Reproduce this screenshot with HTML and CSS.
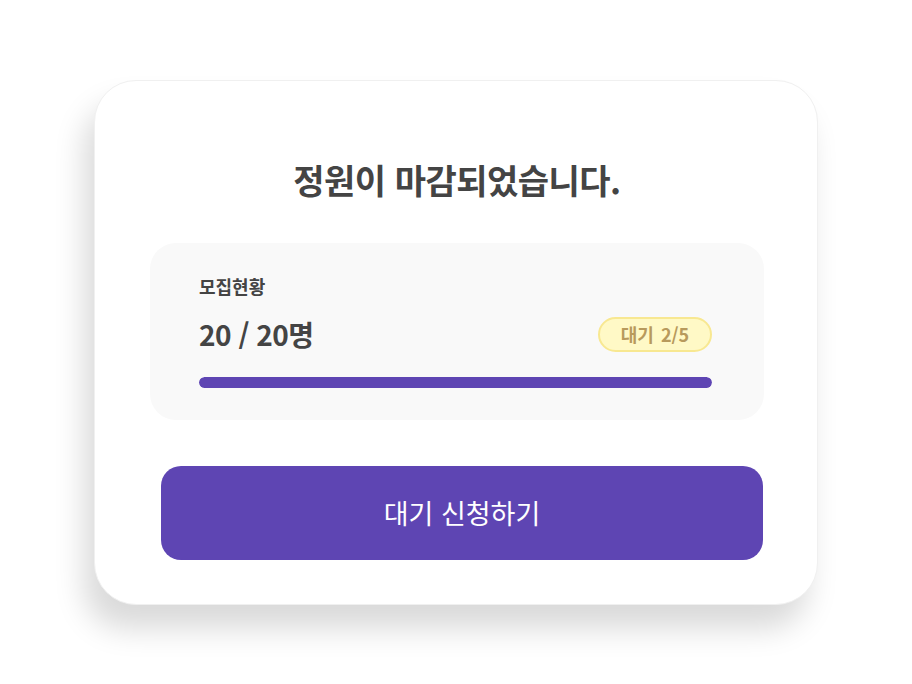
FILE: index.html
```html
<!DOCTYPE html>
<html lang="ko">
<head>
    <meta charset="UTF-8">
    <meta name="viewport" content="width=device-width, initial-scale=1.0">
    <title>모집 마감</title>
    <link rel="stylesheet" href="styles.css">
</head>
<body>
    <div class="closed-card">
        <h1 class="closed-title">정원이 마감되었습니다.</h1>

        <div class="status-box">
            <div class="status-label">모집현황</div>
            <div class="status-row">
                <span class="status-count">20 / 20명</span>
                <span class="wait-badge">대기 2/5</span>
            </div>
            <div class="progress-track">
                <div class="progress-fill" style="width: 100%"></div>
            </div>
        </div>

        <button class="wait-button">대기 신청하기</button>
    </div>
</body>
</html>
```

FILE: styles.css
```css
* {
    margin: 0;
    padding: 0;
    box-sizing: border-box;
    font-family: 'Noto Sans CJK KR', 'Noto Sans', sans-serif;
}

body {
    display: flex;
    justify-content: center;
    align-items: center;
    min-height: 100vh;
    background-color: #ffffff;
}

.closed-card {
    width: 724px;
    height: 525px;
    background-color: white;
    border-radius: 42px;
    border: 1px solid #f0f0f0;
    box-shadow: -10px 24px 30px rgba(0, 0, 0, 0.15);
    padding: 79px 53px 0 55px;
    display: flex;
    flex-direction: column;
}

.closed-title {
    font-size: 34px;
    line-height: 40px;
    font-weight: 700;
    color: #444;
    text-align: center;
    letter-spacing: -0.5px;
    margin-bottom: 43px;
}

.status-box {
    background-color: #f9f9f9;
    border-radius: 26px;
    padding: 32px 52px 32px 49px;
}

.status-label {
    font-size: 18px;
    line-height: 22px;
    font-weight: 700;
    color: #444;
    margin-bottom: 20px;
}

.status-row {
    display: flex;
    justify-content: space-between;
    align-items: center;
    height: 35px;
    margin-bottom: 25px;
}

.status-count {
    font-size: 28px;
    font-weight: 700;
    color: #444;
    letter-spacing: -0.5px;
}

.wait-badge {
    display: flex;
    align-items: center;
    justify-content: center;
    width: 114px;
    height: 35px;
    border-radius: 18px;
    background-color: #fff9c6;
    border: 2px solid #f8e891;
    color: #b89a5c;
    font-size: 18px;
    font-weight: 700;
    word-spacing: 2px;
}

.progress-track {
    height: 11px;
    border-radius: 6px;
    background-color: #e6e1f4;
    overflow: hidden;
}

.progress-fill {
    height: 100%;
    background-color: #5e45b3;
    border-radius: 6px;
}

.wait-button {
    margin: 46px 1px 0 11px;
    height: 94px;
    border: none;
    border-radius: 20px;
    background-color: #5e45b3;
    color: white;
    font-size: 27px;
    font-weight: 400;
    cursor: pointer;
}
```
